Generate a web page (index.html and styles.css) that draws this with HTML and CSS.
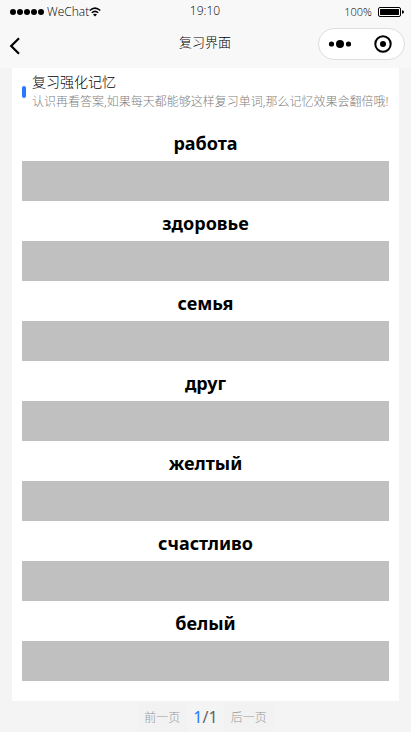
FILE: index.html
```html
<!DOCTYPE html>
<html lang="zh-CN">
<head>
<meta charset="utf-8">
<meta name="viewport" content="width=device-width, initial-scale=1">
<title>复习界面</title>
<link rel="stylesheet" href="styles.css">
</head>
<body>
<header class="top">
  <div class="status">
    <div class="carrier">
      <svg class="signal" viewBox="0 0 35 8" aria-hidden="true"><circle cx="4" cy="4" r="3"/><circle cx="11" cy="4" r="3"/><circle cx="18" cy="4" r="3"/><circle cx="25" cy="4" r="3"/><circle cx="32" cy="4" r="3"/></svg>
      <span>WeChat</span>
      <svg class="wifi" viewBox="0 0 12 10" aria-hidden="true"><path d="M.7 3.5Q6-1.2 11.3 3.5M2.8 5.8Q6 3 9.2 5.8" fill="none" stroke="#000" stroke-width="1.5"/><path d="M4 7.4Q6 5.9 8 7.4L6 9.5z"/></svg>
    </div>
    <time class="clock">19:10</time>
    <div class="power">
      <span>100%</span>
      <svg class="battery" viewBox="0 0 26 10" aria-hidden="true"><rect x=".5" y=".5" width="22" height="9" rx="1.5" fill="#fff" stroke="#000"/><rect x="2" y="2" width="19" height="6" rx=".5"/><path d="M24 3.2q2 .3 2 1.8t-2 1.8z"/></svg>
    </div>
  </div>
  <nav class="nav">
    <button class="back" type="button" aria-label="返回"><svg viewBox="0 0 12 18" aria-hidden="true"><path d="M10 1.2 2.2 9l7.8 7.8" fill="none" stroke="#000" stroke-width="2.2"/></svg></button>
    <h1 class="page-title">复习界面</h1>
    <div class="capsule">
      <button type="button" aria-label="更多"><svg class="dots" viewBox="0 0 24 10" aria-hidden="true"><circle cx="3.5" cy="5" r="2.6"/><circle cx="12" cy="5" r="4"/><circle cx="20.5" cy="5" r="2.6"/></svg></button>
      <button type="button" aria-label="关闭"><svg class="target" viewBox="0 0 18 18" aria-hidden="true"><circle cx="9" cy="9" r="7.7" fill="none" stroke="#000" stroke-width="2"/><circle cx="9" cy="9" r="3"/></svg></button>
    </div>
  </nav>
</header>
<main class="card">
  <section class="intro">
    <div class="intro-text">
      <h2>复习强化记忆</h2>
      <p>认识再看答案,如果每天都能够这样复习单词,那么记忆效果会翻倍哦!</p>
    </div>
  </section>
  <ul class="words">
    <li><h3>работа</h3><button class="answer" type="button" aria-label="查看答案"></button></li>
    <li><h3>здоровье</h3><button class="answer" type="button" aria-label="查看答案"></button></li>
    <li><h3>семья</h3><button class="answer" type="button" aria-label="查看答案"></button></li>
    <li><h3>друг</h3><button class="answer" type="button" aria-label="查看答案"></button></li>
    <li><h3>желтый</h3><button class="answer" type="button" aria-label="查看答案"></button></li>
    <li><h3>счастливо</h3><button class="answer" type="button" aria-label="查看答案"></button></li>
    <li><h3>белый</h3><button class="answer" type="button" aria-label="查看答案"></button></li>
  </ul>
</main>
<footer class="pager">
  <button type="button" disabled>前一页</button>
  <span class="count"><span class="current">1</span>/1</span>
  <button type="button" disabled>后一页</button>
</footer>
</body>
</html>
```
FILE: styles.css
```css
* {
  box-sizing: border-box;
}

body {
  margin: 0;
  background: #f4f4f4;
  color: #333;
  font-family: "Noto Sans", "Noto Sans CJK SC", sans-serif;
}

h1, h2, h3, p, ul {
  margin: 0;
  padding: 0;
}

button {
  padding: 0;
  border: 0;
  background: none;
  font: inherit;
}

svg {
  display: block;
}

.top {
  background: #f8f8f8;
  color: #000;
}

.status {
  display: grid;
  grid-template-columns: 1fr auto 1fr;
  align-items: center;
  height: 24px;
  padding: 0 7px 0 9px;
  font-family: "Open Sans", "Noto Sans", sans-serif;
  font-size: 12px;
  font-weight: 300;
  line-height: 20px;
}

.carrier,
.power {
  display: flex;
  align-items: center;
}

.clock {
  padding-bottom: 2px;
  padding-right: 3px;
}

.power {
  justify-content: flex-end;
  gap: 6px;
  font-size: 11px;
}

.signal {
  width: 35px;
  height: 8px;
  margin-right: 3px;
}

.wifi {
  width: 12px;
  height: 10px;
}

.battery {
  width: 26px;
  height: 10px;
}

.nav {
  display: grid;
  grid-template-columns: 1fr auto 1fr;
  align-items: center;
  height: 44px;
  padding: 0 6px 4px 9px;
}

.back {
  justify-self: start;
  padding-top: 4px;
}

.back svg {
  width: 12px;
  height: 18px;
}

.page-title {
  padding: 0 4px 4px 0;
  font-size: 13px;
  font-weight: 300;
  line-height: 20px;
}

.capsule {
  display: flex;
  justify-self: end;
  width: 87px;
  height: 32px;
  border: 1px solid #dedede;
  border-radius: 16px;
  background: #fff;
}

.capsule button {
  display: grid;
  flex: 1;
  place-items: center;
}

.dots {
  width: 24px;
  height: 10px;
}

.target {
  width: 18px;
  height: 18px;
}

.card {
  margin: 0 12px;
  padding: 4px 10px 20px;
  background: #fff;
}

.intro {
  display: flex;
  align-items: center;
  gap: 6px;
}

.intro::before {
  flex: none;
  width: 4px;
  height: 12px;
  border-radius: 2px;
  background: #2979ff;
  content: "";
}

.intro-text {
  white-space: nowrap;
}

.intro h2 {
  color: #000;
  font-size: 14px;
  font-weight: 300;
  line-height: 20px;
}

.intro p {
  color: #808080;
  font-size: 12px;
  font-weight: 300;
  line-height: 20px;
}

.words {
  padding-top: 9px;
  list-style: none;
}

.words h3 {
  padding: 10px 0 6px;
  color: #000;
  font-size: 18px;
  line-height: 24px;
  text-align: center;
}

.answer {
  display: block;
  width: 100%;
  height: 40px;
  background: #c0c0c0;
}

.pager {
  display: flex;
  justify-content: center;
  align-items: center;
  gap: 6px;
  height: 31px;
}

.pager button {
  height: 30px;
  padding: 0 7px;
  border-radius: 3px;
  background: #f2f2f2;
  color: #999;
  font-size: 12px;
  font-weight: 300;
}

.count {
  color: #606266;
  font-size: 16px;
  line-height: 30px;
}

.current {
  color: #2979ff;
}
```
